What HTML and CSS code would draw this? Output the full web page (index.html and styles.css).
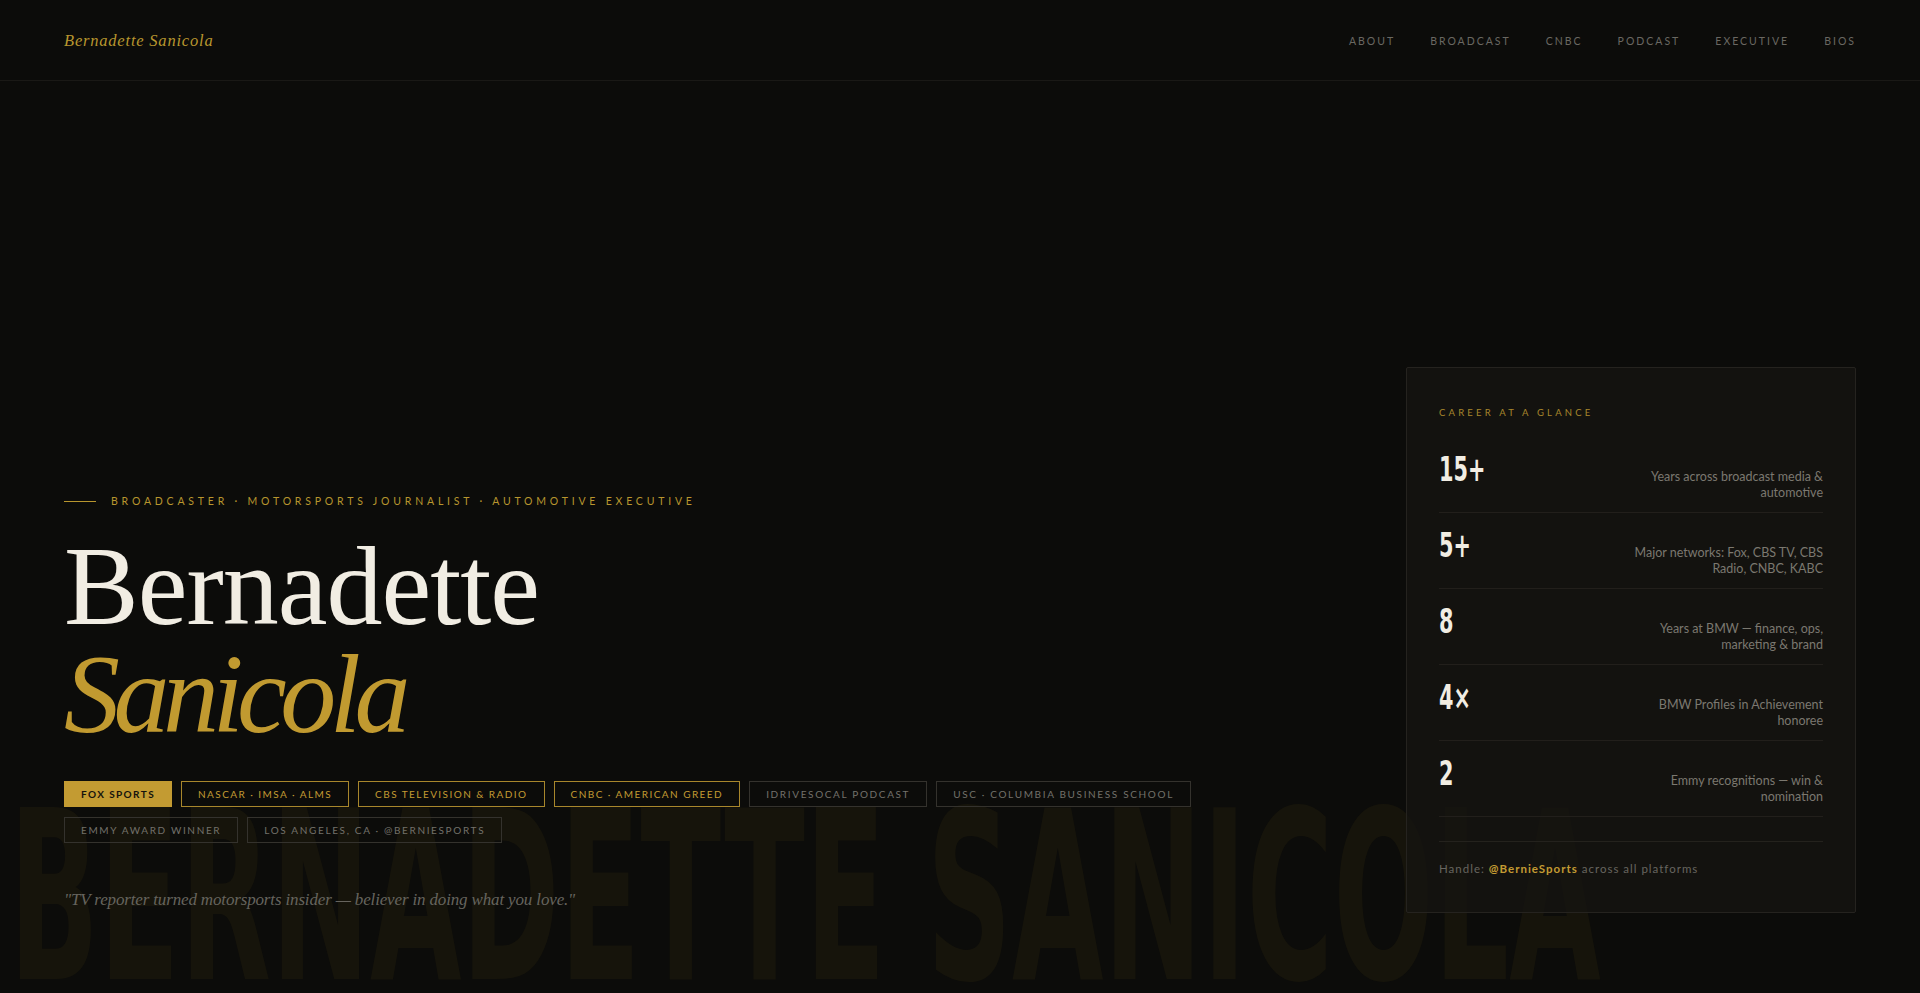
FILE: index.html
```html
<!DOCTYPE html>
<html lang="en">
<head>
    <meta charset="UTF-8">
    <meta name="viewport" content="width=device-width, initial-scale=1.0">
    <title>Bernadette Sanicola</title>
    <link rel="stylesheet" href="styles.css">
</head>
<body>

<header class="site-header">
    <a class="logo" href="#">Bernadette Sanicola</a>
    <nav>
        <ul>
            <li><a href="#about">About</a></li>
            <li><a href="#broadcast">Broadcast</a></li>
            <li><a href="#cnbc">CNBC</a></li>
            <li><a href="#podcast">Podcast</a></li>
            <li><a href="#executive">Executive</a></li>
            <li><a href="#bios">Bios</a></li>
        </ul>
    </nav>
</header>

<section class="hero">
    <div class="hero-bg-text" aria-hidden="true">BERNADETTE SANICOLA</div>

    <div class="hero-main">
        <div class="eyebrow">
            <span class="eyebrow-line"></span>
            <span>Broadcaster · Motorsports Journalist · Automotive Executive</span>
        </div>

        <h1 class="hero-name">
            <span class="first">Bernadette</span>
            <span class="last">Sanicola</span>
        </h1>

        <ul class="tags">
            <li class="tag tag-solid">Fox Sports</li>
            <li class="tag tag-gold">NASCAR · IMSA · ALMS</li>
            <li class="tag tag-gold">CBS Television &amp; Radio</li>
            <li class="tag tag-gold">CNBC · American Greed</li>
            <li class="tag">iDriveSoCal Podcast</li>
            <li class="tag">USC · Columbia Business School</li>
            <li class="tag">Emmy Award Winner</li>
            <li class="tag">Los Angeles, CA · @BernieSports</li>
        </ul>

        <p class="quote">"TV reporter turned motorsports insider — believer in doing what you love."</p>
    </div>

    <aside class="glance">
        <p class="glance-label">Career at a Glance</p>

        <div class="stat">
            <span class="stat-num">15+</span>
            <span class="stat-desc">Years across broadcast media &amp; automotive</span>
        </div>
        <div class="stat">
            <span class="stat-num">5+</span>
            <span class="stat-desc">Major networks: Fox, CBS TV, CBS Radio, CNBC, KABC</span>
        </div>
        <div class="stat">
            <span class="stat-num">8</span>
            <span class="stat-desc">Years at BMW — finance, ops, marketing &amp; brand</span>
        </div>
        <div class="stat">
            <span class="stat-num">4×</span>
            <span class="stat-desc">BMW Profiles in Achievement honoree</span>
        </div>
        <div class="stat">
            <span class="stat-num">2</span>
            <span class="stat-desc">Emmy recognitions — win &amp; nomination</span>
        </div>

        <p class="handle">Handle: <strong>@BernieSports</strong> across all platforms</p>
    </aside>
</section>

</body>
</html>
```

FILE: styles.css
```css
* {
    margin: 0;
    padding: 0;
    box-sizing: border-box;
}

body {
    font-family: 'Lato', 'Open Sans', sans-serif;
    background-color: #0c0c0a;
    color: #f1ede3;
    overflow: hidden;
}

a {
    color: inherit;
    text-decoration: none;
}

/* Header */
.site-header {
    display: flex;
    justify-content: space-between;
    align-items: center;
    height: 81px;
    padding: 1px 64px 0;
    border-bottom: 1px solid #1a1916;
}

.logo {
    font-family: 'Liberation Serif', serif;
    font-style: italic;
    font-size: 16.5px;
    letter-spacing: 0.8px;
    color: #b8962e;
}

.site-header nav {
    margin-bottom: 5px;
}

.site-header nav ul {
    list-style: none;
    display: flex;
    gap: 35px;
}

.site-header nav a {
    font-size: 10.5px;
    letter-spacing: 2px;
    text-transform: uppercase;
    color: #6a6862;
}

/* Hero */
.hero {
    position: relative;
    height: calc(100vh - 81px);
    display: grid;
    grid-template-columns: 1fr 450px;
    column-gap: 64px;
    align-items: end;
    padding: 0 64px 80px;
}

.hero-bg-text {
    position: absolute;
    left: 9px;
    bottom: -23px;
    font-family: 'DejaVu Sans', sans-serif;
    font-stretch: condensed;
    font-weight: bold;
    font-size: 236px;
    line-height: 1;
    white-space: nowrap;
    color: rgba(200, 160, 40, 0.055);
    transform: scaleX(0.557);
    transform-origin: left bottom;
    z-index: 0;
}

.hero-main, .glance {
    position: relative;
    z-index: 1;
}

.eyebrow {
    display: flex;
    align-items: center;
    gap: 15px;
    font-size: 10.5px;
    line-height: 14px;
    letter-spacing: 3.8px;
    text-transform: uppercase;
    color: #b8962e;
    margin-bottom: 24px;
}

.eyebrow-line {
    width: 32px;
    height: 1px;
    background-color: #b8962e;
}

.hero-name {
    font-family: 'Liberation Serif', serif;
    font-weight: normal;
    font-size: 112px;
    line-height: 108px;
    letter-spacing: -1px;
    margin-bottom: 33px;
}

.hero-name span {
    display: block;
}

.hero-name .first {
    color: #f1ede3;
}

.hero-name .last {
    font-style: italic;
    letter-spacing: -6.5px;
    color: #c19a30;
}

.tags {
    list-style: none;
    display: flex;
    flex-wrap: wrap;
    gap: 10px 9px;
    max-width: 1200px;
    margin-bottom: 44px;
}

.tag {
    font-size: 10px;
    line-height: 12px;
    letter-spacing: 1.65px;
    text-transform: uppercase;
    padding: 6px 16px;
    border: 1px solid #34322d;
    color: #73716a;
}

.tag-solid {
    background-color: #c39b32;
    border-color: #c39b32;
    color: #15130c;
    font-weight: bold;
    letter-spacing: 1.4px;
}

.tag-gold {
    border-color: #a8872c;
    color: #c39b32;
    letter-spacing: 1.45px;
}

.quote {
    font-family: 'Liberation Serif', serif;
    font-style: italic;
    font-size: 17px;
    line-height: 26px;
    letter-spacing: -0.15px;
    color: #66645e;
}

/* Career card */
.glance {
    background-color: rgba(22, 20, 17, 0.75);
    border: 1px solid #25231f;
    border-radius: 2px;
    padding: 38px 32px 34px;
}

.glance-label {
    font-size: 9.5px;
    line-height: 14px;
    letter-spacing: 3.2px;
    text-transform: uppercase;
    color: #a8872c;
    margin-bottom: 17px;
}

.stat {
    display: flex;
    justify-content: space-between;
    align-items: baseline;
    padding: 15px 0 11px;
    border-bottom: 1px solid #221f1b;
}

.stat-num {
    display: inline-block;
    font-family: 'DejaVu Sans', sans-serif;
    font-stretch: condensed;
    font-weight: bold;
    font-size: 34px;
    line-height: 1;
    color: #f1ede3;
    transform: scaleX(0.68);
    transform-origin: left center;
}

.stat-desc {
    max-width: 195px;
    text-align: right;
    font-size: 12.5px;
    line-height: 16px;
    color: #7b7870;
}

.handle {
    margin-top: 24px;
    padding-top: 18px;
    border-top: 1px solid #24221d;
    font-size: 11.5px;
    line-height: 18px;
    letter-spacing: 1px;
    color: #67655f;
}

.handle strong {
    color: #c39b32;
}
```
